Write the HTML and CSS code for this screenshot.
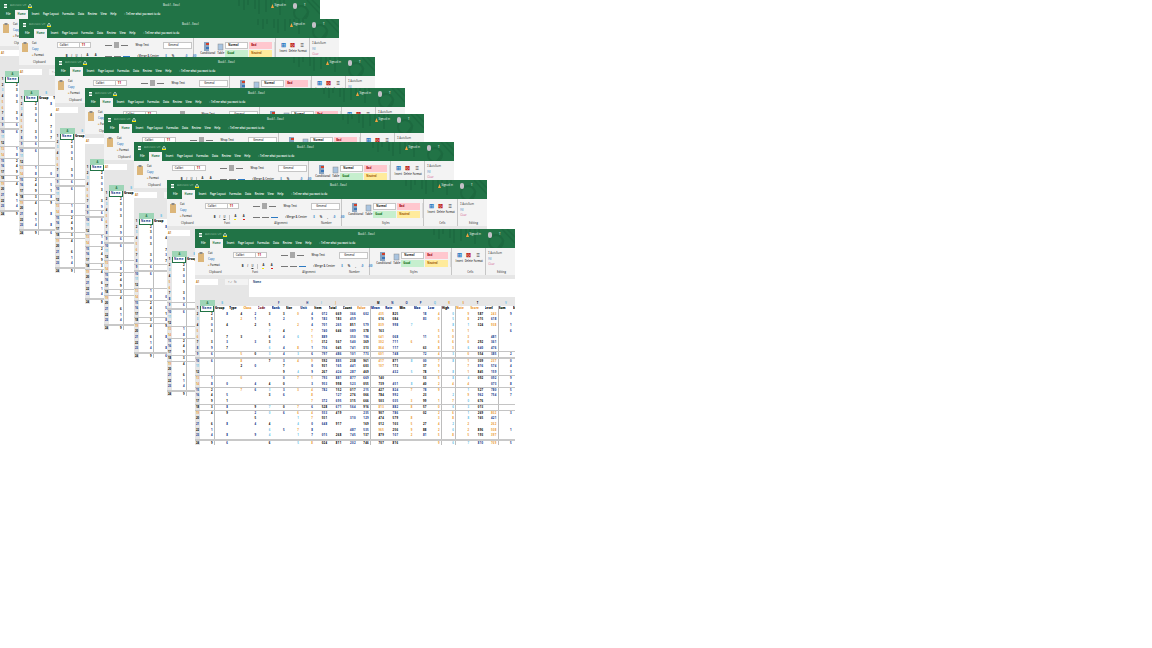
FILE: index.html
```html
<!DOCTYPE html>
<html lang="en">
  <head>
    <meta charset="utf-8">
    <title>Excel windows</title>
    <link rel="stylesheet" href="styles.css">
    <script src="app.js" defer></script>
  </head>
  <body>
    <div class="desktop" id="desktop"></div>

    <template id="excelWindow">
      <div class="window">
        <div class="titlebar">
          <svg class="title-art" width="83" height="19" viewBox="0 0 83 19">
            <path d="M2 0v6M7 0v10M11 0v5M18 0v9M22 0v14M29 0v12M34 0v8M38 0v5M43 0v15M47 0v6" stroke="#1d6a40" stroke-width="1.5" fill="none"/>
            <circle cx="64" cy="13" r="7" stroke="#1d6a40" stroke-width="2" fill="none"/>
            <path d="M70 0l13 14M75 0l8 8M66 19l6-8" stroke="#1d6a40" stroke-width="1.5" fill="none"/>
          </svg>
          <div class="title-row">
            <svg class="title-menu" width="3" height="4" viewBox="0 0 3 4"><path d="M0 .5h3M0 2h3M0 3.5h3" stroke="#fff"/></svg>
            <span class="quick">AutoSave Off</span>
            <svg class="title-warn" width="4" height="4" viewBox="0 0 4 4"><path d="M2 0L4 3H0Z" fill="none" stroke="#fff" stroke-width=".6"/><path d="M0 3.5h4" stroke="#ffe500"/></svg>
            <span class="doc-title">Book1 - Excel</span>
            <svg class="warn-orange" width="3" height="4" viewBox="0 0 3 4"><path d="M1.5 0L3 4H0Z" fill="#f4a340"/></svg>
            <span class="account">Signed in</span>
            <span class="avatar"></span>
            <span class="share">T</span>
          </div>
          <div class="tab-row">
            <span class="tab">File</span>
            <span class="tab tab-active">Home</span>
            <span class="tab">Insert</span>
            <span class="tab">Page Layout</span>
            <span class="tab">Formulas</span>
            <span class="tab">Data</span>
            <span class="tab">Review</span>
            <span class="tab">View</span>
            <span class="tab">Help</span>
            <span class="tab tab-tell">&#9675; Tell me what you want to do</span>
          </div>
        </div>

        <div class="ribbon">
          <div class="group group-clipboard">
            <div class="group-body">
              <svg class="paste-icon" width="6" height="10" viewBox="0 0 6 10"><rect y="1" width="6" height="9" fill="#dcb67a"/><rect x="1.5" width="3" height="2" fill="#8a8a8a"/></svg>
              <div class="stack">
                <span>Cut</span>
                <span class="blue">Copy</span>
                <span><i class="tan">&#9632;</i> Format</span>
              </div>
            </div>
            <span class="group-label">Clipboard</span>
          </div>

          <div class="group group-font">
            <div class="group-body column">
              <div class="line">
                <span class="box box-name">Calibri</span>
                <span class="box box-size"><b class="red">11</b></span>
              </div>
              <div class="line font-tools">
                <b>B</b><i>I</i><u>U</u>
                <span class="sep"></span>
                <span class="swatch swatch-yellow">A</span>
                <span class="swatch swatch-red">A</span>
              </div>
            </div>
            <span class="group-label">Font</span>
          </div>

          <div class="group group-align">
            <div class="group-body column">
              <div class="line">
                <span class="rule"></span><span class="rule-block"></span><span class="rule"></span>
                <span class="wrap-text">Wrap Text</span>
              </div>
              <div class="line align-low">
                <span class="rule"></span><span class="rule"></span><span class="rule rule-blue"></span>
                <span class="wrap-text merge">Merge &amp; Center</span>
              </div>
            </div>
            <span class="group-label">Alignment</span>
          </div>

          <div class="group group-number">
            <div class="group-body column">
              <span class="box box-number">General</span>
              <div class="line number-tools"><span class="blue">$</span><span>%</span><span>,</span><span class="blue">.0</span><span class="blue">.00</span></div>
            </div>
            <span class="group-label">Number</span>
          </div>

          <div class="group group-styles">
            <div class="group-body">
              <div class="big-btn">
                <svg width="7" height="9" viewBox="0 0 7 9"><rect width="5" height="9" fill="#8aa4c0"/><rect x="2" y="1" width="3" height="2" fill="#d0402a"/><rect x="2" y="5" width="3" height="2" fill="#3a76b8"/></svg>
                <span>Conditional</span>
              </div>
              <div class="big-btn">
                <svg width="7" height="9" viewBox="0 0 7 9"><rect x="1" y="2" width="5" height="6" fill="#a9c4e0" stroke="#8a8a8a" stroke-width=".5"/></svg>
                <span>Table</span>
              </div>
              <div class="style-grid">
                <span class="style style-normal">Normal</span>
                <span class="style style-bad">Bad</span>
                <span class="style style-good">Good</span>
                <span class="style style-neutral">Neutral</span>
              </div>
              <span class="style-scroll"></span>
            </div>
            <span class="group-label">Styles</span>
          </div>

          <div class="group group-cells">
            <div class="group-body cells-body">
              <div class="cell-btn"><i class="blue">&#8862;</i><span>Insert</span></div>
              <div class="cell-btn"><i class="red">&#8864;</i><span>Delete</span></div>
              <div class="cell-btn"><i>&#8801;</i><span>Format</span></div>
            </div>
            <span class="group-label">Cells</span>
          </div>

          <div class="group group-editing">
            <div class="group-body column">
              <span>&#931; AutoSum</span>
              <span class="blue">Fill</span>
              <span class="pink">Clear</span>
            </div>
            <span class="group-label">Editing</span>
          </div>
        </div>

        <div class="formula-area">
          <span class="name-box">A1</span>
          <span class="fx-box">&#215; &#10003; fx</span>
          <span class="formula-input">Name</span>
        </div>

        <div class="col-head" data-slot="head"></div>
        <div class="sheet" data-slot="sheet"></div>
      </div>
    </template>
  </body>
</html>
```

FILE: styles.css
```css
html, body { margin: 0; background: #fff; }
body { font-family: "Open Sans", "Liberation Sans", sans-serif; font-size: 2.7px; line-height: 1; color: #333; }
.desktop { position: relative; width: 1152px; height: 648px; overflow: hidden; }

.window { position: absolute; width: 320px; height: 216px; overflow: hidden; background: #e6e6e6; }

.titlebar { position: relative; height: 19px; background: #217346; color: #fff; }
.title-art { position: absolute; right: 0; top: 0; }
.title-row { position: relative; height: 10px; display: flex; align-items: center; padding-left: 4px; padding-top: 1px; box-sizing: border-box; }
.title-menu { margin-right: 3px; }
.quick { width: 17px; color: #8dbb9f; overflow: hidden; white-space: nowrap; }
.title-warn { margin-left: 1px; }
.doc-title { margin-left: 131px; width: 108px; }
.warn-orange { margin-right: 0.5px; }
.account { width: 17.5px; }
.avatar { width: 4px; height: 6px; border-radius: 2px; background: #c4c0c8; margin-left: 1px; }
.share { margin-left: 7px; }

.tab-row { display: flex; height: 9px; align-items: center; padding-left: 6px; gap: 3.6px; font-weight: 600; white-space: nowrap; }
.tab { color: #fff; }
.tab-active { background: #f3f3f3; color: #217346; height: 9px; line-height: 9px; width: 13px; text-align: center; font-weight: 700; margin-left: 1px; }
.tab-tell { margin-left: 4px; font-size: 2.5px; }

.ribbon { display: flex; height: 27px; background: #f3f3f3; }
.group { display: flex; flex-direction: column; box-sizing: border-box; padding-top: 4px; height: 27px; }
.group-body { flex: 1; display: flex; gap: 2px; min-height: 0; }
.column { flex-direction: column; gap: 3px; }
.group-label { height: 4px; text-align: center; color: #555; font-weight: 600; }
.group-clipboard { width: 38px; padding-left: 3px; }
.group-font { width: 45px; }
.group-align { width: 60px; padding-left: 3px; }
.group-number { width: 33px; border-right: 1px solid #c6c6c6; padding-left: 2px; }
.group-styles { width: 82px; padding-left: 6px; border-right: 1px solid #c6c6c6; }
.group-cells { width: 34px; padding-left: 3px; border-right: 1px solid #c6c6c6; }
.group-editing { width: 29px; padding-left: 2px; white-space: nowrap; }

.paste-icon { flex: none; }
.stack { display: flex; flex-direction: column; gap: 3.5px; padding-left: 2px; white-space: nowrap; font-weight: 600; }
.blue { color: #2b79c2; }
.red { color: #c0281c; }
.pink { color: #d0508a; }
.tan { color: #dcb67a; font-style: normal; }

.line { display: flex; align-items: center; gap: 2px; height: 6px; }
.box { display: block; background: #fff; border: 1px solid #c6c6c6; box-sizing: border-box; height: 6px; line-height: 4px; padding-left: 2px; font-weight: 600; overflow: hidden; }
.box-name { width: 23px; }
.box-size { width: 11px; border-left: 0; margin-left: -2px; }
.font-tools { gap: 3.5px; padding-left: 9px; margin-top: 2px; font-weight: 600; }
.sep { width: 1px; height: 5px; background: #c6c6c6; }
.swatch { font-weight: 700; border-bottom: 1px solid; height: 4px; color: #222; }
.swatch-yellow { border-color: #f5e400; margin-left: 1px; }
.swatch-red { border-color: #e0201a; margin-left: 3px; }

.rule { width: 7px; height: 1px; background: #777; flex: none; }
.rule-blue { background: #2b79c2; }
.rule-block { width: 5px; height: 6px; background: #a8a8a8; flex: none; }
.wrap-text { margin-left: 6px; white-space: nowrap; font-weight: 600; }
.align-low { margin-top: 2px; }
.merge { margin-left: 5px; border-left: 1px solid #c6c6c6; padding-left: 1px; }

.box-number { width: 29px; height: 7px; line-height: 5px; padding-left: 4px; }
.number-tools { gap: 5px; padding-left: 2px; font-weight: 700; margin-top: 1px; }

.big-btn { display: flex; flex-direction: column; align-items: center; width: 15px; gap: 1px; font-weight: 600; white-space: nowrap; }
.style-grid { display: grid; grid-template-columns: 23px 23px; grid-auto-rows: 7px; gap: 1px; margin-left: -1px; }
.style { padding-left: 2px; line-height: 7px; font-weight: 700; overflow: hidden; box-sizing: border-box; }
.style-normal { background: #fff; border: 1px solid #c6c6c6; line-height: 5px; color: #111; }
.style-bad { background: #ffc7ce; color: #9c0006; }
.style-good { background: #c6efce; color: #006100; }
.style-neutral { background: #ffeb9c; color: #9c5700; }
.style-scroll { width: 3px; height: 15px; background: #dcdcdc; }

.cells-body { gap: 1.5px; }
.cell-btn { display: flex; flex-direction: column; align-items: center; gap: 2px; font-weight: 600; font-size: 2.6px; width: 8px; }
.cell-btn i { font-style: normal; font-size: 6px; }

.formula-area { display: flex; height: 22px; align-items: flex-start; padding-top: 4px; box-sizing: border-box; margin-bottom: 3px; }
.name-box { width: 23px; height: 6px; background: #fff; line-height: 6px; padding-left: 1px; box-sizing: border-box; color: #c07a20; font-weight: 700; }
.fx-box { width: 23px; height: 6px; margin-left: 7px; background: #f3f3f3; line-height: 6px; padding-left: 3px; box-sizing: border-box; color: #999; font-weight: 700; white-space: nowrap; }
.formula-input { flex: 1; height: 18px; margin-left: 1px; background: #fff; padding: 2px 0 0 4px; box-sizing: border-box; font-weight: 700; color: #2a4a7a; }

.col-head { display: flex; height: 6px; background: #e6e6e6; }
.head-corner { width: 5px; flex: none; }
.head-cell { width: 14.2px; flex: none; text-align: center; line-height: 6px; font-size: 2.7px; font-weight: 700; overflow: hidden; }
.head-cell-a { width: 15px; background: #9fd5b7; color: #217346; }

.sheet { background: #fff; }
.row { display: flex; height: 6px; }
.row-short { height: 5px; }
.row-line { border-bottom: 1px solid #c4c4c4; }
.row-thick { border-bottom: 2px solid #c8c8c8; }
.row-num { width: 5px; flex: none; background: #e6e6e6; text-align: center; line-height: 5px; font-size: 2.7px; font-weight: 700; overflow: hidden; }
.cell { width: 14.2px; flex: none; box-sizing: border-box; padding-right: 1px; text-align: right; line-height: 5px; font-size: 2.8px; font-weight: 700; letter-spacing: 0.35px; overflow: hidden; white-space: nowrap; }
.cell-a { width: 15px; }
.cell-label { text-align: left; padding: 0; letter-spacing: 0; font-size: 3px; font-weight: 800; }
.cell-selected { box-shadow: inset 0 -1px 0 #217346, inset -1px 0 0 #217346, inset 1px 0 0 #217346; text-align: left; padding-left: 2px; }
.edge { border-right: 1px solid #bdbdbd; }

.k { color: #000; }
.n { color: #0b2f86; }
.o { color: #ec9a32; }
.s { color: #68bfe8; }
.m { color: #7a1030; }
```

FILE: app.js
```js
// window positions, bottom one last
var windows = [[0, 0], [19, 19], [55, 57], [85, 88], [104, 114], [134, 142], [167, 180], [195, 229]];

// row height: s = 5px, t = 6px; | = 1px rule under it, = 2px rule under it
var rowKinds = ["t", "s", "t", "t", "t", "s", "t", "s|", "s=", "s", "t", "s|", "t", "s|", "s", "t", "s|", "s|", "s", "t", "t", "s", "t=", "t"];

var edgeCols = [0, 11, 16, 17, 20];
var headColours = { 1: "s", 5: "n", 7: "n", 8: "s", 9: "o", 12: "k", 13: "n", 14: "n", 15: "n", 16: "s", 17: "o", 18: "o", 19: "k", 21: "s", 22: "o" };

// how often a column holds a value, and how long/what colour it is
var density = [0.8, 0.5, 0.35, 0.5, 0.75, 0.7, 0.55, 0.95, 0.95, 0.95, 0.95, 0.95, 0.95, 0.95, 0.5, 0.55, 0.9, 0.9, 0.85, 0.85, 0.9, 0.7, 0.8];
var digits = [1, 1, 1, 1, 1, 1, 1, 1, 3, 3, 3, 3, 3, 3, 1, 2, 1, 1, 1, 3, 3, 1, 2];
var colours = ["nk", "kn", "ok", "kn", "sk", "nk", "so", "no", "nk", "kn", "nk", "kn", "ok", "kn", "so", "nk", "o", "so", "os", "nk", "no", "n", "os"];
var labels = ["Name", "Group", "Type", "Class", "Code", "Rank", "Size", "Unit", "Item", "Total", "Count", "Value", "Mean", "Rate", "Min", "Max", "Low", "High", "Note", "Score", "Level", "Sum", "End"];

var seed = 7;
function next() {
  seed = (seed * 1103515245 + 12345) % 2147483648;
  return seed / 2147483648;
}

function number(len) {
  var out = "";
  for (var i = 0; i < len; i++) out += Math.floor(next() * 10);
  return out;
}

function cellHtml(r, c) {
  var cls = "cell" + (c == 0 ? " cell-a" : "");
  if (edgeCols.indexOf(c) >= 0) cls += " edge";
  if (r == 0) {
    if (c == 0) return '<span class="' + cls + ' cell-selected n">' + labels[0] + "</span>";
    var tone = next() < 0.55 ? "k" : (next() < 0.5 ? "n" : (next() < 0.5 ? "m" : "o"));
    return '<span class="' + cls + " cell-label " + tone + '">' + labels[c] + "</span>";
  }
  var text = next() < density[c] ? number(digits[c]) : "";
  var set = colours[c];
  return '<span class="' + cls + " " + set.charAt(Math.floor(next() * set.length)) + '">' + text + "</span>";
}

function buildHead() {
  var html = '<span class="head-corner"></span>';
  for (var c = 0; c < 23; c++) {
    var tone = headColours[c] || "";
    var letter = String.fromCharCode(65 + c);
    html += '<span class="head-cell' + (c == 0 ? " head-cell-a" : " " + tone) + '">' + (c == 0 || tone ? letter : "") + "</span>";
  }
  return html;
}

function buildSheet() {
  var html = "";
  var numColours = "onks";
  rowKinds.forEach(function(kind, r) {
    var cls = "row" + (kind.charAt(0) == "s" ? " row-short" : "");
    if (kind.charAt(1) == "|") cls += " row-line";
    if (kind.charAt(1) == "=") cls += " row-thick";
    html += '<div class="' + cls + '">';
    html += '<span class="row-num ' + numColours.charAt(Math.floor(next() * 4)) + '">' + (r + 1) + "</span>";
    for (var c = 0; c < 23; c++) html += cellHtml(r, c);
    html += "</div>";
  });
  return html;
}

var head = buildHead();
var sheet = buildSheet();
var desktop = document.getElementById("desktop");
var tpl = document.getElementById("excelWindow");

windows.forEach(function(pos) {
  var win = tpl.content.firstElementChild.cloneNode(true);
  win.style.left = pos[0] + "px";
  win.style.top = pos[1] + "px";
  win.querySelector('[data-slot="head"]').innerHTML = head;
  win.querySelector('[data-slot="sheet"]').innerHTML = sheet;
  desktop.appendChild(win);
});
```
